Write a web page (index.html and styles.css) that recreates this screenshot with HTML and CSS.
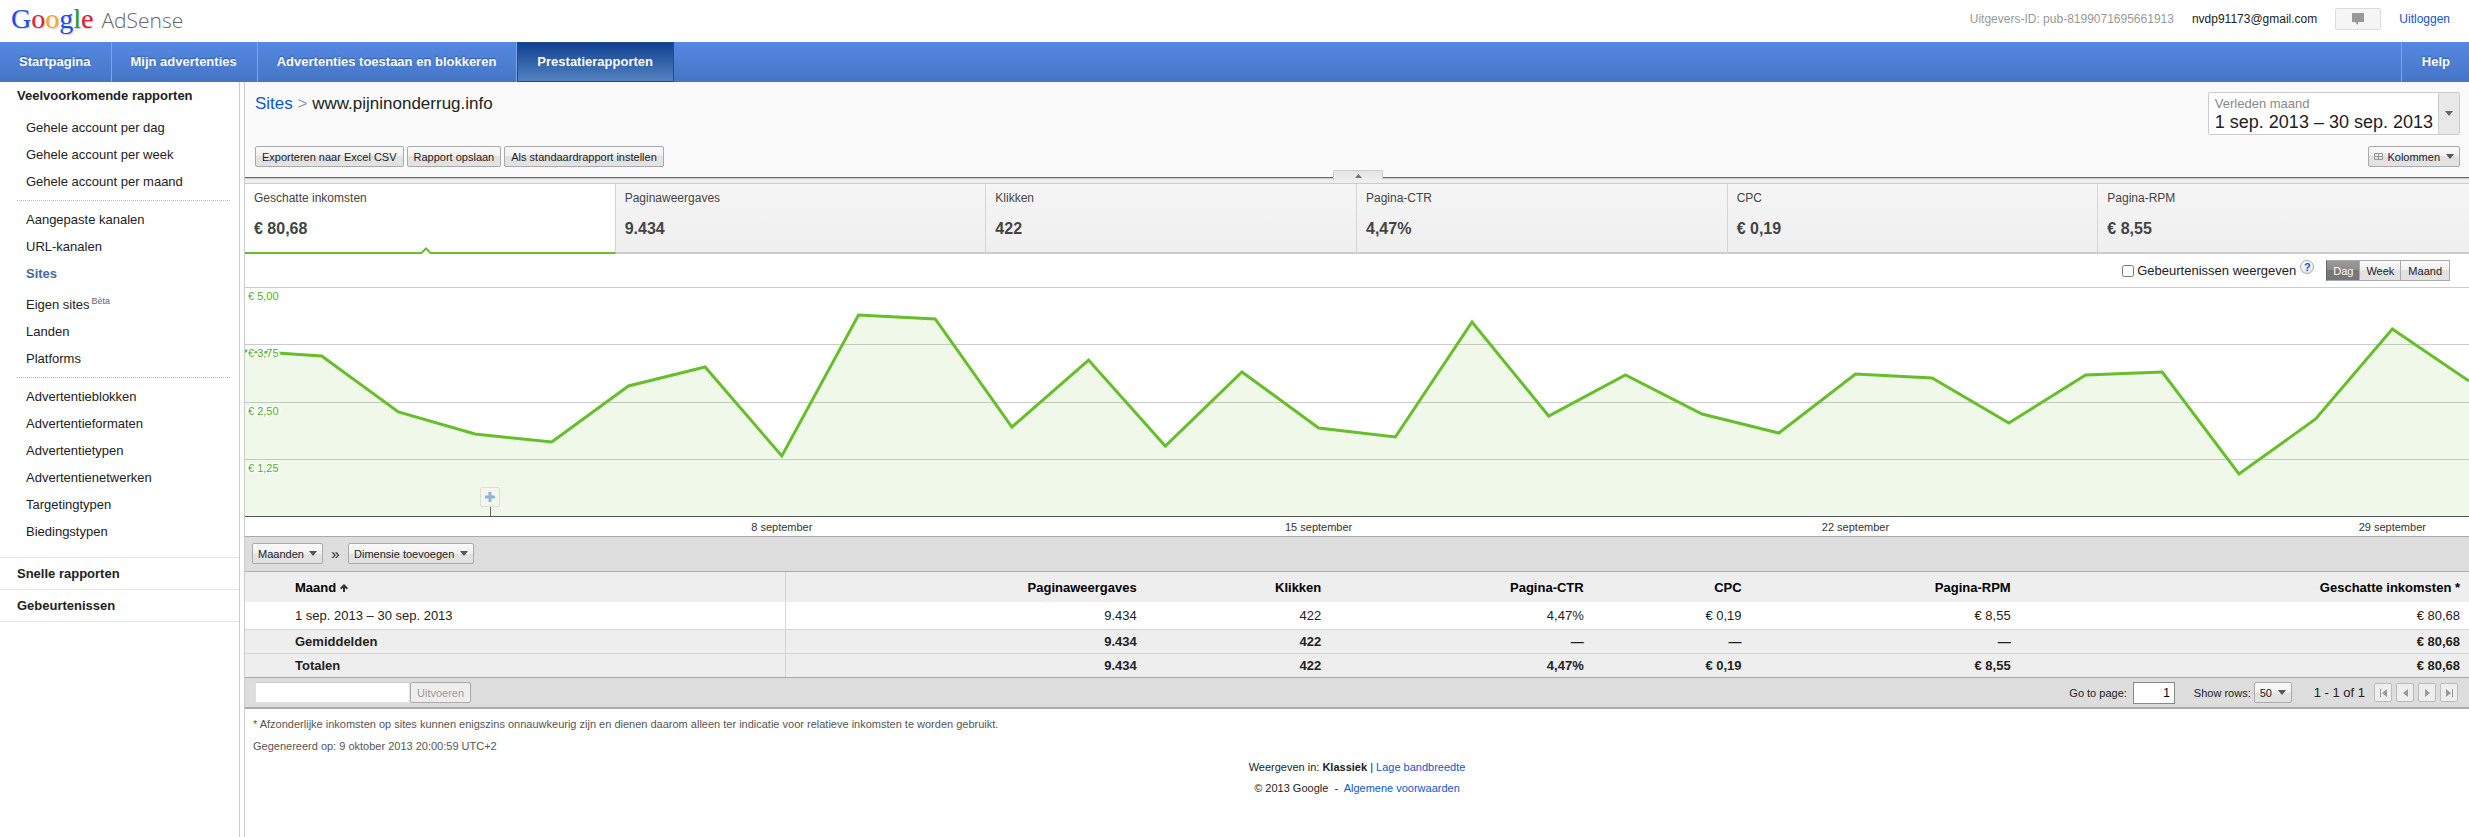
FILE: index.html
```html
<!DOCTYPE html>
<html lang="nl">

<head>
  <meta charset="UTF-8">
  <meta name="viewport" content="width=device-width, initial-scale=1.0">
  <title>Google AdSense - Prestatierapporten</title>
  <link rel="stylesheet" href="styles.css">
</head>

<body>
  <header class="topbar">
    <a class="logo" href="#">
      <span class="google"><span class="g-blue">G</span><span class="g-red">o</span><span class="g-yellow">o</span><span class="g-blue">g</span><span class="g-green">l</span><span class="g-red">e</span></span>
      <span class="product">AdSense</span>
    </a>
    <div class="account">
      <span class="publisher-id">Uitgevers-ID: pub-8199071695661913</span>
      <span class="email">nvdp91173@gmail.com</span>
      <button class="feedback" aria-label="Feedback">
        <svg width="12" height="12" viewBox="0 0 12 12"><path d="M0 0h12v9H6v3L3 9H0z" fill="#999"/></svg>
      </button>
      <a class="logout" href="#">Uitloggen</a>
    </div>
  </header>

  <nav class="navbar">
    <a href="#">Startpagina</a>
    <a href="#">Mijn advertenties</a>
    <a href="#">Advertenties toestaan en blokkeren</a>
    <a href="#" class="active">Prestatierapporten</a>
    <a href="#" class="help">Help</a>
  </nav>

  <div class="page">
    <aside class="sidebar">
      <h2>Veelvoorkomende rapporten</h2>
      <ul>
        <li><a href="#">Gehele account per dag</a></li>
        <li><a href="#">Gehele account per week</a></li>
        <li><a href="#">Gehele account per maand</a></li>
      </ul>
      <ul>
        <li><a href="#">Aangepaste kanalen</a></li>
        <li><a href="#">URL-kanalen</a></li>
        <li><a href="#" class="current">Sites</a></li>
        <li class="beta"><a href="#">Eigen sites<sup>Bèta</sup></a></li>
        <li><a href="#">Landen</a></li>
        <li><a href="#">Platforms</a></li>
      </ul>
      <ul>
        <li><a href="#">Advertentieblokken</a></li>
        <li><a href="#">Advertentieformaten</a></li>
        <li><a href="#">Advertentietypen</a></li>
        <li><a href="#">Advertentienetwerken</a></li>
        <li><a href="#">Targetingtypen</a></li>
        <li><a href="#">Biedingstypen</a></li>
      </ul>
      <h3>Snelle rapporten</h3>
      <h3>Gebeurtenissen</h3>
    </aside>

    <main class="report">
      <div class="report-head">
        <div class="head-left">
          <h1><a href="#">Sites</a> <span class="sep">&gt;</span> www.pijninonderrug.info</h1>
          <div class="actions">
            <button class="btn">Exporteren naar Excel CSV</button>
            <button class="btn">Rapport opslaan</button>
            <button class="btn">Als standaardrapport instellen</button>
          </div>
        </div>
        <div class="head-right">
          <button class="datepicker">
            <span class="range">
              <span class="range-name">Verleden maand</span>
              <span class="range-dates">1 sep. 2013 – 30 sep. 2013</span>
            </span>
            <span class="range-arrow"><svg width="8" height="5" viewBox="0 0 8 5"><path d="M0 0h8L4 5z" fill="#666"/></svg></span>
          </button>
          <button class="btn columns">
            <svg width="9" height="7" viewBox="0 0 9 7"><path d="M.5.5h8v6h-8zM0 3.5h9M4.5 0v7" fill="none" stroke="#999"/></svg>
            Kolommen
            <svg class="caret" width="8" height="5" viewBox="0 0 8 5"><path d="M0 0h8L4 5z" fill="#555"/></svg>
          </button>
        </div>
      </div>

      <div class="divider">
        <button class="collapse" aria-label="Grafiek verbergen">
          <svg width="7" height="4" viewBox="0 0 7 4"><path d="M0 4h7L3.5 0z" fill="#777"/></svg>
        </button>
      </div>

      <div class="metrics">
        <div class="metric selected">
          <span class="name">Geschatte inkomsten</span>
          <span class="value">€ 80,68</span>
          <svg class="notch" width="14" height="7" viewBox="0 0 14 7"><path d="M1 7h12L7 1z" fill="#fff"/><path d="M0 6h2.5L7 1.5 11.5 6H14" fill="none" stroke="#67be2b" stroke-width="2"/></svg>
        </div>
        <div class="metric"><span class="name">Paginaweergaves</span><span class="value">9.434</span></div>
        <div class="metric"><span class="name">Klikken</span><span class="value">422</span></div>
        <div class="metric"><span class="name">Pagina-CTR</span><span class="value">4,47%</span></div>
        <div class="metric"><span class="name">CPC</span><span class="value">€ 0,19</span></div>
        <div class="metric"><span class="name">Pagina-RPM</span><span class="value">€ 8,55</span></div>
      </div>

      <div class="chart-controls">
        <input type="checkbox" id="show-events">
        <label for="show-events">Gebeurtenissen weergeven</label>
        <a class="hint" href="#">?</a>
        <div class="period">
          <button class="btn on">Dag</button>
          <button class="btn">Week</button>
          <button class="btn">Maand</button>
        </div>
      </div>

      <div class="chart">
        <svg class="plot" viewBox="0 0 2900 229" preserveAspectRatio="none" role="img" aria-label="Geschatte inkomsten per dag">
          <g class="grid">
            <path d="M0 .5H2900M0 57.5H2900M0 115.5H2900M0 172.5H2900"/>
          </g>
          <path class="area" d="M0 64L100 69 200 125 300 147 400 155 500 99 600 80 700 169 800 28 900 32 1000 140 1100 73 1200 159 1300 85 1400 141 1500 150 1600 35 1700 129 1800 88 1900 127 2000 146 2100 87 2200 91 2300 136 2400 88 2500 85 2600 187 2700 132 2800 42 2900 94V229H0z"/>
          <polyline class="line" points="0,64 100,69 200,125 300,147 400,155 500,99 600,80 700,169 800,28 900,32 1000,140 1100,73 1200,159 1300,85 1400,141 1500,150 1600,35 1700,129 1800,88 1900,127 2000,146 2100,87 2200,91 2300,136 2400,88 2500,85 2600,187 2700,132 2800,42 2900,94"/>
        </svg>
        <div class="y-labels">
          <span>€ 5,00</span>
          <span>€ 3,75</span>
          <span>€ 2,50</span>
          <span>€ 1,25</span>
        </div>
        <button class="add-event" aria-label="Gebeurtenis toevoegen">
          <svg width="10" height="10" viewBox="0 0 10 10"><path d="M3.5 0h3v3.5H10v3H6.5V10h-3V6.5H0v-3h3.5z" fill="#8fb4d6"/></svg>
        </button>
      </div>
      <div class="x-labels">
        <span>8 september</span>
        <span>15 september</span>
        <span>22 september</span>
        <span>29 september</span>
      </div>

      <div class="dimensions">
        <select class="btn dropdown" aria-label="Dimensie">
          <option>Maanden</option>
        </select>
        <span class="arrows">»</span>
        <select class="btn dropdown" aria-label="Tweede dimensie">
          <option>Dimensie toevoegen</option>
        </select>
      </div>

      <table class="results">
        <colgroup>
          <col class="c-month">
          <col class="c-views">
          <col class="c-clicks">
          <col class="c-ctr">
          <col class="c-cpc">
          <col class="c-rpm">
          <col>
        </colgroup>
        <thead>
          <tr>
            <th>Maand <svg width="8" height="8" viewBox="0 0 8 8"><path d="M4 8V2M.7 4.7L4 1.4l3.3 3.3" fill="none" stroke="#333" stroke-width="2"/></svg></th>
            <th>Paginaweergaves</th>
            <th>Klikken</th>
            <th>Pagina-CTR</th>
            <th>CPC</th>
            <th>Pagina-RPM</th>
            <th>Geschatte inkomsten *</th>
          </tr>
        </thead>
        <tbody>
          <tr>
            <td>1 sep. 2013 – 30 sep. 2013</td>
            <td>9.434</td>
            <td>422</td>
            <td>4,47%</td>
            <td>€ 0,19</td>
            <td>€ 8,55</td>
            <td>€ 80,68</td>
          </tr>
        </tbody>
        <tfoot>
          <tr>
            <td>Gemiddelden</td>
            <td>9.434</td>
            <td>422</td>
            <td>—</td>
            <td>—</td>
            <td>—</td>
            <td>€ 80,68</td>
          </tr>
          <tr>
            <td>Totalen</td>
            <td>9.434</td>
            <td>422</td>
            <td>4,47%</td>
            <td>€ 0,19</td>
            <td>€ 8,55</td>
            <td>€ 80,68</td>
          </tr>
        </tfoot>
      </table>

      <div class="table-bar">
        <input type="text" class="filter" aria-label="Filter">
        <button class="btn" disabled>Uitvoeren</button>
        <div class="paging">
          <label for="page-number">Go to page:</label>
          <input type="text" id="page-number" value="1">
          <label for="page-rows" class="rows-label">Show rows:</label>
          <select id="page-rows" class="btn dropdown">
            <option>50</option>
          </select>
          <span class="count">1 - 1 of 1</span>
          <div class="pager">
            <button aria-label="First"><svg width="9" height="8" viewBox="0 0 9 8"><path d="M1 0h1v8H1zM8 0v8L3 4z"/></svg></button>
            <button aria-label="Previous"><svg width="9" height="8" viewBox="0 0 9 8"><path d="M7 0v8L2 4z"/></svg></button>
            <button aria-label="Next"><svg width="9" height="8" viewBox="0 0 9 8"><path d="M2 0v8l5-4z"/></svg></button>
            <button aria-label="Last"><svg width="9" height="8" viewBox="0 0 9 8"><path d="M1 0v8l5-4zM7 0h1v8H7z"/></svg></button>
          </div>
        </div>
      </div>

      <div class="notes">
        <p>* Afzonderlijke inkomsten op sites kunnen enigszins onnauwkeurig zijn en dienen daarom alleen ter indicatie voor relatieve inkomsten te worden gebruikt.</p>
        <p>Gegenereerd op: 9 oktober 2013 20:00:59 UTC+2</p>
      </div>

      <footer class="footer">
        <p>Weergeven in: <b>Klassiek</b> | <a href="#">Lage bandbreedte</a></p>
        <p>© 2013 Google&nbsp; -&nbsp; <a href="#">Algemene voorwaarden</a></p>
      </footer>
    </main>
  </div>
</body>

</html>
```
FILE: styles.css
```css
* {
  box-sizing: border-box;
}

body {
  margin: 0;
  min-height: 100vh;
  display: flex;
  flex-direction: column;
  font-family: "Liberation Sans", Arial, sans-serif;
  font-size: 13px;
  color: #222;
  background: #fff;
}

h1, h2, h3, p, ul {
  margin: 0;
  padding: 0;
}

a {
  color: #15c;
  text-decoration: none;
}

button, input, select {
  margin: 0;
  font-family: inherit;
}

svg {
  display: block;
}

/* top bar */

.topbar {
  display: flex;
  justify-content: space-between;
  height: 42px;
  padding: 0 19px 0 11px;
}

.logo {
  display: flex;
  align-items: baseline;
  gap: 8px;
  line-height: 38px;
}

.google {
  font-family: "Liberation Serif", serif;
  font-size: 28px;
  text-shadow: 1px 1px 1px #ccc;
}

.g-blue { color: #1a50e6; }
.g-red { color: #dc2131; }
.g-yellow { color: #f7a81c; }
.g-green { color: #1a9e30; }

.product {
  font-family: "Open Sans", sans-serif;
  font-weight: 300;
  font-size: 21px;
  color: #666;
}

.account {
  display: flex;
  align-items: center;
  padding-bottom: 4px;
  font-size: 12px;
}

.publisher-id {
  color: #999;
}

.email {
  margin-left: 18px;
}

.feedback {
  display: flex;
  align-items: center;
  justify-content: center;
  width: 46px;
  height: 22px;
  margin: 0 18px;
  border: 1px solid #dcdcdc;
  border-radius: 2px;
  background: #f5f5f5;
}

/* navigation */

.navbar {
  display: flex;
  height: 40px;
  background: linear-gradient(#5588e2, #4575c4);
}

.navbar a {
  padding: 0 20px 0 19px;
  border-right: 1px solid #7ba4ea;
  line-height: 39px;
  font-weight: bold;
  color: #fff;
  text-shadow: 0 -1px 1px #2a56a4;
}

.navbar a.active {
  border: 1px solid #1c4d9b;
  line-height: 37px;
  background: linear-gradient(#11418f, #5383c2);
}

.navbar a.help {
  margin-left: auto;
  padding: 0 19px 0 20px;
  border-right: none;
  border-left: 1px solid #7ba4ea;
}

.page {
  display: flex;
  flex: 1;
}

/* sidebar */

.sidebar {
  flex: none;
  width: 240px;
  border-right: 1px solid #ccc;
}

.sidebar h2 {
  padding: 1px 0 0 17px;
  line-height: 26px;
  font-size: 13px;
}

.sidebar ul {
  margin: 0 9px 0 17px;
  padding: 5px 0 5px 9px;
  border-bottom: 1px dotted #bbb;
  list-style: none;
}

.sidebar ul:last-of-type {
  padding-bottom: 12px;
  border-bottom: none;
}

.sidebar li {
  line-height: 27px;
}

.sidebar li.beta {
  padding-top: 4px;
}

.sidebar li a {
  color: #222;
}

.sidebar li a.current {
  font-weight: bold;
  color: #4a6a9f;
}

.sidebar sup {
  margin-left: 2px;
  font-size: 9px;
  line-height: 0;
  color: #666;
}

.sidebar h3 {
  padding-left: 17px;
  border-top: 1px solid #e5e5e5;
  line-height: 31px;
  font-size: 13px;
}

.sidebar h3:last-child {
  border-bottom: 1px solid #e5e5e5;
}

/* report */

.report {
  flex: 1;
  min-width: 0;
  margin-left: 4px;
  border-left: 1px solid #ccc;
  overflow: hidden;
}

.btn {
  height: 21px;
  padding: 0 6px;
  border: 1px solid #aaa;
  border-radius: 2px;
  background: linear-gradient(#fafafa, #f0f0f0 50%, #e2e2e2 50%, #e2e2e2);
  font-size: 11px;
  color: #222;
  white-space: nowrap;
}

.btn:disabled {
  background: #eee;
  color: #999;
}

.dropdown {
  appearance: none;
  padding: 0 18px 0 5px;
  background: url("data:image/svg+xml,%3Csvg xmlns='http://www.w3.org/2000/svg' width='8' height='5'%3E%3Cpath d='M0 0h8L4 5z' fill='%23555'/%3E%3C/svg%3E") no-repeat right 5px center,
    linear-gradient(#fafafa, #f0f0f0 50%, #e2e2e2 50%, #e2e2e2);
}

.report-head {
  display: flex;
  justify-content: space-between;
  padding: 10px 9px 10px 10px;
  background: #fafafa;
}

.head-left {
  display: flex;
  flex-direction: column;
  justify-content: space-between;
}

.head-left h1 {
  font-size: 17px;
  font-weight: normal;
  line-height: 24px;
}

.sep {
  color: #999;
}

.actions {
  display: flex;
  gap: 3px;
}

.head-right {
  display: flex;
  flex-direction: column;
  align-items: flex-end;
  gap: 11px;
}

.datepicker {
  display: flex;
  height: 43px;
  padding: 0;
  border: 1px solid #ccc;
  border-radius: 2px;
  background: #fff;
  text-align: left;
}

.range {
  padding: 2px 5px 0 6px;
}

.range-name {
  display: block;
  font-size: 13px;
  line-height: 17px;
  color: #888;
}

.range-dates {
  display: block;
  font-size: 18px;
  line-height: 21px;
  color: #222;
}

.range-arrow {
  display: flex;
  align-items: center;
  justify-content: center;
  width: 21px;
  height: 100%;
  border-left: 1px solid #ccc;
  background: #e8e8e8;
}

.columns {
  display: flex;
  align-items: center;
  gap: 4px;
  padding: 0 5px;
}

.caret {
  margin-left: 2px;
}

.divider {
  position: relative;
  height: 7px;
  border-top: 1px solid #3a70c0;
  border-bottom: 1px solid #ccc;
  background: #eee;
  box-shadow: inset 0 1px #ccc;
}

.collapse {
  position: absolute;
  top: -8px;
  left: 50%;
  display: flex;
  align-items: center;
  justify-content: center;
  width: 50px;
  height: 10px;
  margin-left: -24px;
  padding: 0;
  border: 1px solid #ccc;
  border-bottom: none;
  border-radius: 2px 2px 0 0;
  background: linear-gradient(#e4e4e4, #eee);
}

.metrics {
  display: grid;
  grid-template-columns: repeat(6, 1fr);
}

.metric {
  position: relative;
  display: flex;
  flex-direction: column;
  gap: 13px;
  padding: 6px 9px 13px;
  border-right: 1px solid #d5d5d5;
  border-bottom: 2px solid #ccc;
  background: linear-gradient(#f5f5f5, #efefef);
  color: #444;
}

.metric:last-child {
  border-right: none;
}

.metric.selected {
  border-bottom-color: #67be2b;
  background: #fff;
}

.metric .name {
  font-size: 12px;
  line-height: 16px;
}

.metric .value {
  font-size: 16px;
  font-weight: bold;
  line-height: 20px;
}

.notch {
  position: absolute;
  bottom: -2px;
  left: 50%;
  margin-left: -11px;
}

/* chart */

.chart-controls {
  display: flex;
  align-items: center;
  justify-content: flex-end;
  height: 33px;
  padding-right: 19px;
}

.chart-controls input {
  width: 12px;
  height: 12px;
  margin-right: 3px;
}

.hint {
  align-self: flex-start;
  width: 14px;
  margin: 6px 12px 0 4px;
  border: 1px solid #aaa;
  border-radius: 50%;
  background: linear-gradient(#fff, #dde6f2);
  font-size: 11px;
  font-weight: bold;
  line-height: 12px;
  text-align: center;
}

.period {
  display: flex;
}

.period .btn {
  border-left: none;
  border-radius: 0;
}

.period .btn.on {
  padding: 0 6px;
  border-left: 1px solid #666;
  background: linear-gradient(#999, #8c8c8c 50%, #777 50%);
  color: #fff;
}

.period .btn:last-child {
  padding: 0 7px;
}

.chart {
  position: relative;
  border-bottom: 1px solid #555;
}

.plot {
  width: 100%;
  height: 229px;
}

.grid path, .line {
  fill: none;
  vector-effect: non-scaling-stroke;
}

.grid path {
  stroke: #ccc;
}

.area {
  fill: #67be2b;
  fill-opacity: 0.1;
}

.line {
  stroke: #67be2b;
  stroke-width: 3px;
}

/* labels lie over the plot, one per grid line */
.y-labels {
  position: absolute;
  inset: 0;
  display: grid;
  grid-template-rows: repeat(4, 1fr);
  padding-left: 3px;
  font-size: 11px;
  line-height: 19px;
  color: #4fae1c;
  text-shadow: 1px 0 #fff, -1px 0 #fff, 0 1px #fff, 0 -1px #fff, 1px 1px #fff, -1px -1px #fff, 1px -1px #fff, -1px 1px #fff, 2px 0 #fff, -2px 0 #fff;
}

.add-event {
  position: absolute;
  bottom: 9px;
  left: 11%;
  display: flex;
  align-items: center;
  justify-content: center;
  width: 20px;
  height: 20px;
  margin-left: -10px;
  padding: 0;
  border: 1px solid #ddd;
  border-radius: 2px;
  background: #f3f6f0;
}

.add-event::after {
  content: "";
  position: absolute;
  top: 19px;
  left: 9px;
  height: 9px;
  border-left: 1px solid #666;
}

/* four weeks of seven days on a 29 day axis, each label centred on its day */
.x-labels {
  display: grid;
  grid-template-columns: repeat(4, 1fr);
  width: calc(100% * 28 / 29);
  height: 19px;
  margin-left: calc(100% * 3.5 / 29);
  font-size: 11px;
  line-height: 20px;
  text-align: center;
  color: #333;
}

/* table */

.dimensions {
  display: flex;
  align-items: center;
  height: 36px;
  padding: 0 7px 1px;
  border-top: 1px solid #aaa;
  border-bottom: 1px solid #aaa;
  background: #ddd;
}

.arrows {
  width: 25px;
  font-size: 15px;
  text-align: center;
}

.results {
  width: 100%;
  table-layout: fixed;
  border-collapse: collapse;
}

.c-month { width: 24.3%; }
.c-views { width: 16.2%; }
.c-clicks { width: 8.3%; }
.c-ctr { width: 11.8%; }
.c-cpc { width: 7.1%; }
.c-rpm { width: 12.1%; }

.results th, .results td {
  height: 24px;
  padding: 0 9px;
  text-align: right;
}

.results th {
  height: 30px;
  padding-top: 1px;
  color: #000;
}

.results th svg {
  display: inline-block;
}

.results tbody td {
  height: 27px;
}

.results th:first-child, .results td:first-child {
  padding-left: 50px;
  border-right: 1px solid #d5d5d5;
  text-align: left;
}

.results thead, .results tfoot {
  background: #eee;
}

.results tfoot td {
  border-top: 1px solid #d5d5d5;
  font-weight: bold;
}

.table-bar {
  display: flex;
  align-items: center;
  height: 32px;
  padding: 0 11px 0 10px;
  border-top: 1px solid #aaa;
  border-bottom: 2px solid #aaa;
  background: #ddd;
}

.filter {
  width: 155px;
  height: 21px;
  border: 1px solid #e0e0e0;
  border-top-color: #ccc;
  background: #fff;
}

.paging {
  display: flex;
  align-items: center;
  margin-left: auto;
  font-size: 11px;
}

#page-number {
  width: 42px;
  height: 22px;
  margin-left: 6px;
  padding: 0 4px;
  border: 1px solid #888;
  font-size: 12px;
  text-align: right;
}

.rows-label {
  margin: 0 3px 0 19px;
}

.count {
  margin: 0 9px 0 22px;
  font-size: 13px;
}

.pager {
  display: flex;
  gap: 4px;
}

.pager button {
  display: flex;
  align-items: center;
  justify-content: center;
  width: 18px;
  height: 19px;
  padding: 0;
  border: 1px solid #bbb;
  border-radius: 2px;
  background: #eee;
}

.pager svg {
  fill: #999;
}

/* footer */

.notes {
  padding: 4px 8px 0;
  font-size: 11px;
  line-height: 22px;
  color: #555;
}

.footer {
  font-size: 11px;
  line-height: 21px;
  text-align: center;
  color: #222;
}
```
